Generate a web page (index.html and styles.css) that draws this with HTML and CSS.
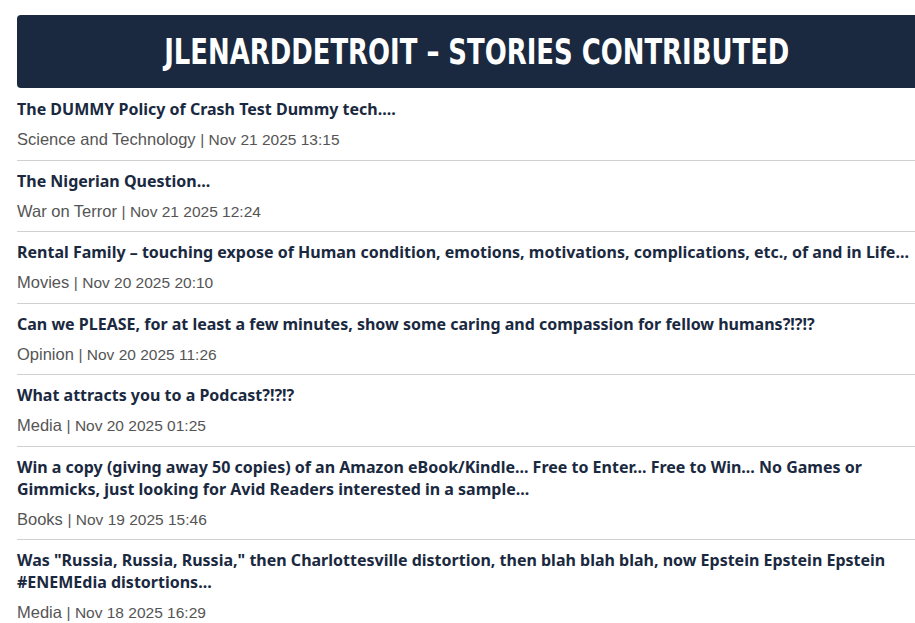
FILE: index.html
```html
<!DOCTYPE html>
<html>
<head>
<meta charset="utf-8">
<link rel="stylesheet" href="styles.css">
</head>
<body>
<div class="page">
  <header class="banner"><h1>JLENARDDETROIT – STORIES CONTRIBUTED</h1></header>
  <ul class="stories">
    <li class="story">
      <a class="title">The DUMMY Policy of Crash Test Dummy tech....</a>
      <div class="meta"><span class="cat">Science and Technology</span> <span class="date">| Nov 21 2025 13:15</span></div>
    </li>
    <li class="story">
      <a class="title">The Nigerian Question...</a>
      <div class="meta"><span class="cat">War on Terror</span> <span class="date">| Nov 21 2025 12:24</span></div>
    </li>
    <li class="story">
      <a class="title">Rental Family – touching expose of Human condition, emotions, motivations, complications, etc., of and in Life...</a>
      <div class="meta"><span class="cat">Movies</span> <span class="date">| Nov 20 2025 20:10</span></div>
    </li>
    <li class="story">
      <a class="title">Can we PLEASE, for at least a few minutes, show some caring and compassion for fellow humans?!?!?</a>
      <div class="meta"><span class="cat">Opinion</span> <span class="date">| Nov 20 2025 11:26</span></div>
    </li>
    <li class="story">
      <a class="title">What attracts you to a Podcast?!?!?</a>
      <div class="meta"><span class="cat">Media</span> <span class="date">| Nov 20 2025 01:25</span></div>
    </li>
    <li class="story">
      <a class="title">Win a copy (giving away 50 copies) of an Amazon eBook/Kindle... Free to Enter... Free to Win... No Games or Gimmicks, just looking for Avid Readers interested in a sample...</a>
      <div class="meta"><span class="cat">Books</span> <span class="date">| Nov 19 2025 15:46</span></div>
    </li>
    <li class="story">
      <a class="title">Was "Russia, Russia, Russia," then Charlottesville distortion, then blah blah blah, now Epstein Epstein Epstein #ENEMEdia distortions...</a>
      <div class="meta"><span class="cat">Media</span> <span class="date">| Nov 18 2025 16:29</span></div>
    </li>
  </ul>
</div>
</body>
</html>
```
FILE: styles.css
```css
html, body {
  margin: 0;
  padding: 0;
  background: #ffffff;
}
.page {
  width: 920px;
  padding: 15px 0 0 17px;
  font-family: "Noto Sans", sans-serif;
}
.banner {
  background: #1a2940;
  border-radius: 4px;
  height: 73px;
  display: flex;
  align-items: center;
  justify-content: center;
  margin-bottom: 1px;
}
.banner h1 {
  margin: 0;
  color: #ffffff;
  font-family: "DejaVu Sans Condensed", "DejaVu Sans", sans-serif;
  font-weight: 700;
  font-size: 36px;
  white-space: nowrap;
  transform: scaleX(0.8);
}
.stories {
  list-style: none;
  margin: 0;
  padding: 0;
}
.story {
  padding: 9px 0 9.5px;
  border-bottom: 1px solid #d0d0d0;
}
.title {
  display: block;
  color: #1a2940;
  font-weight: 700;
  font-size: 16px;
  line-height: 22px;
}
.meta {
  margin-top: 8px;
  height: 22px;
  line-height: 22px;
  font-family: "Liberation Sans", Arial, sans-serif;
  font-size: 16.5px;
  color: #555555;
  overflow: hidden;
}
.date {
  font-size: 15.5px;
}
```
